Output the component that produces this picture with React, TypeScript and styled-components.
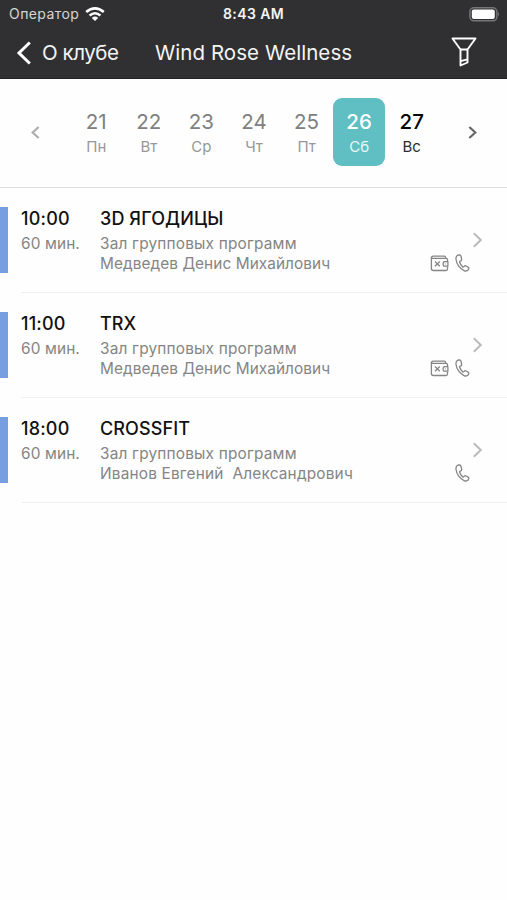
import React from "react";
import styled, { createGlobalStyle } from "styled-components";

const GlobalStyle = createGlobalStyle`
  *, *::before, *::after { box-sizing: border-box; }
  body { margin: 0; background: #fefefe; font-family: Inter, "Liberation Sans", sans-serif; }
  button { font: inherit; color: inherit; background: none; border: 0; padding: 0; margin: 0; }
  svg { display: block; flex: none; }
`;

const Screen = styled.div`
  width: 507px;
  height: 900px;
  overflow: hidden;
  background: #fefefe;
`;

const Header = styled.header`
  height: 79px;
  background: #303032;
  color: #f4f4f4;
  border-bottom: 1px solid #242426;
`;

const StatusBar = styled.div`
  height: 28px;
  display: grid;
  grid-template-columns: 1fr auto 1fr;
  align-items: center;
  padding: 0 7px 0 9px;
`;

const Carrier = styled.div`
  display: flex;
  align-items: center;
  gap: 6px;
  font-size: 14px;
  line-height: 28px;
  letter-spacing: 0.42px;
  color: #d6d6d7;
`;

const Clock = styled.div`
  font-size: 14px;
  font-weight: 600;
  line-height: 28px;
  letter-spacing: 0.4px;
  transform: translateX(-1px);
`;

const Battery = styled.div`
  display: flex;
  justify-content: flex-end;
`;

const NavBar = styled.nav`
  height: 50px;
  display: grid;
  grid-template-columns: 139px 1fr 139px;
  align-items: center;
  padding: 0 16px;
`;

const BackButton = styled.button`
  display: flex;
  align-items: center;
  gap: 9px;
  font-size: 20.5px;
  letter-spacing: -0.45px;
  line-height: 50px;
  white-space: nowrap;
`;

const Title = styled.h1`
  margin: 0;
  font-size: 20.5px;
  font-weight: 400;
  letter-spacing: 0.06px;
  line-height: 50px;
  white-space: nowrap;
`;

const FilterButton = styled.button`
  justify-self: end;
  margin: -3px 14px 0 0;
`;

const WeekStrip = styled.section`
  height: 109px;
  display: grid;
  grid-template-columns: 70px 368px 69px;
  padding-top: 19px;
  border-bottom: 1px solid #dedede;
`;

const WeekArrow = styled.button<{ $color: string }>`
  height: 69px;
  display: flex;
  align-items: center;
  justify-content: center;
  color: ${(p) => p.$color};
`;

const Days = styled.div`
  display: grid;
  grid-template-columns: repeat(7, 1fr);
`;

type DayState = "past" | "selected" | "next";

const DayCell = styled.button<{ $state: DayState }>`
  height: 68px;
  padding-top: 4px;
  border-radius: 9px;
  text-align: center;
  background: ${(p) => (p.$state === "selected" ? "#60bfc2" : "transparent")};
  color: ${(p) => ({ past: "#808080", selected: "#ffffff", next: "#050505" })[p.$state]};
`;

const DayNumber = styled.div<{ $strong: boolean }>`
  font-size: 20.5px;
  font-weight: ${(p) => (p.$strong ? 500 : 400)};
  line-height: 26px;
`;

const DayName = styled.div<{ $state: DayState }>`
  font-size: 15px;
  line-height: 24px;
  color: ${(p) => ({ past: "#979797", selected: "#e9f7f7", next: "#2c2c2c" })[p.$state]};
`;

const ClassList = styled.ul`
  list-style: none;
  margin: 0;
  padding: 0;
`;

const ClassRow = styled.li`
  height: 105px;
  display: grid;
  grid-template-columns: 8px 92px 1fr 77px;
  align-items: start;
  padding-top: 19px;
  background: linear-gradient(#f0f0f0, #f0f0f0) 21px 104px / 486px 1px no-repeat;
`;

const Marker = styled.div`
  height: 66px;
  background: #779fdf;
`;

const TimeColumn = styled.div`
  padding-left: 13px;
`;

const Strong = styled.div<{ $spacing: string }>`
  font-size: 18px;
  font-weight: 500;
  line-height: 23px;
  color: #111;
  white-space: nowrap;
  letter-spacing: ${(p) => p.$spacing};
`;

const Muted = styled.div<{ $spacing?: string }>`
  font-size: 15.4px;
  line-height: 19.5px;
  color: #858585;
  white-space: pre;
  letter-spacing: ${(p) => p.$spacing ?? "0.18px"};
`;

const MutedGroup = styled.div`
  padding-top: 4px;
`;

const Actions = styled.div`
  height: 66px;
  display: flex;
  flex-direction: column;
  align-items: flex-end;
  padding: 25px 24px 0 0;
`;

const Badges = styled.div`
  display: flex;
  align-items: center;
  gap: 6px;
  margin: 6px 13px 0 0;
`;

const WifiIcon = () => (
  <svg width="20" height="14" viewBox="0 0 20 14" fill="none" stroke="#fff" strokeWidth="2.6">
    <path d="M1.2 5.1Q10-2.4 18.8 5.1" />
    <path d="M4.6 8.5Q10 4 15.4 8.5" />
    <path d="M10 14 6.8 10.9Q10 8.3 13.2 10.9Z" fill="#fff" stroke="none" />
  </svg>
);

const BatteryIcon = () => (
  <svg width="31" height="15" viewBox="0 0 31 15">
    <rect x=".9" y=".8" width="27" height="13" rx="4" fill="none" stroke="#757577" strokeWidth="1.5" />
    <rect x="2.8" y="2.6" width="23" height="9.4" rx="2" fill="#fff" />
    <path d="M29 5Q31 7.2 29 9.5Z" fill="#757577" />
  </svg>
);

const BackIcon = () => (
  <svg width="17" height="24" viewBox="0 0 17 24" fill="none" stroke="#fff" strokeWidth="3">
    <path d="M13.8 1.5 3 12 13.8 22.5" />
  </svg>
);

const FilterIcon = () => (
  <svg width="26" height="30" viewBox="0 0 26 30" fill="none" stroke="#fff" strokeWidth="1.9" strokeLinejoin="round">
    <path d="M1.5 1.5H24.5L16.5 12.5V25.5L9.5 28.5V12.5Z" />
    <path d="M9.5 12.5H16.5M9.5 24.2 16.5 22.4" />
  </svg>
);

const SmallChevron = ({ flip = false }: { flip?: boolean }) => (
  <svg width="9" height="13" viewBox="0 0 9 13" fill="none" stroke="currentColor" strokeWidth="2.2">
    <path d={flip ? "M1.3 1 7.3 6.5 1.3 12" : "M7.7 1 1.7 6.5 7.7 12"} />
  </svg>
);

const RowChevron = () => (
  <svg width="11" height="16" viewBox="0 0 11 16" fill="none" stroke="#b9b9b9" strokeWidth="1.9">
    <path d="M1.8 1.3 8.8 8 1.8 14.7" />
  </svg>
);

const WalletIcon = () => (
  <svg width="19" height="17" viewBox="0 0 19 17" fill="none" stroke="#858585" strokeWidth="1.3" strokeLinejoin="round">
    <path d="M17.5 6V4.6Q17.5 3.4 16 3.4H3Q1.4 3.4 1.4 2.6V13.4Q1.4 15.5 3.5 15.5H16Q17.5 15.5 17.5 14V11.7" />
    <path d="M1.4 3Q1.4 1.2 3.2 1.2H14.2Q15.7 1.2 15.7 3.3" />
    <path d="M17.9 6.6H14.8Q13.1 6.6 13.1 8.9T14.8 11.2H17.9ZM15.3 8.9H15.9" />
    <path d="M5 6.5 9.8 11.3M9.8 6.5 5 11.3" />
  </svg>
);

const PhoneIcon = () => (
  <svg width="15" height="18" viewBox="0 0 15 18" fill="none" stroke="#858585" strokeWidth="1.3" strokeLinejoin="round">
    <path d="M3.7 1C1.8 1.1.8 2.8 1 5.2 1.5 10.2 5 15.1 9.4 16.8 11.3 17.5 13.4 16.4 13.8 14.6Q14 13.7 13 13.1L11.2 12Q10 11.4 9.3 12.1L8.7 12.8Q8.1 13.3 7.5 12.7C6.2 11.5 5.2 9.9 4.7 8.3Q4.4 7.5 5.1 7.2L5.9 6.9Q6.8 6.5 6.6 5.4L6.1 2.6Q5.7 1 4.6 1Z" />
  </svg>
);

const days: { number: number; name: string; state: DayState }[] = [
  { number: 21, name: "Пн", state: "past" },
  { number: 22, name: "Вт", state: "past" },
  { number: 23, name: "Ср", state: "past" },
  { number: 24, name: "Чт", state: "past" },
  { number: 25, name: "Пт", state: "past" },
  { number: 26, name: "Сб", state: "selected" },
  { number: 27, name: "Вс", state: "next" },
];

const classes = [
  { time: "10:00", name: "3D ЯГОДИЦЫ", coach: "Медведев Денис Михайлович", spacing: "0.06px", paid: true },
  { time: "11:00", name: "TRX", coach: "Медведев Денис Михайлович", spacing: "0.06px", paid: true },
  { time: "18:00", name: "CROSSFIT", coach: "Иванов Евгений  Александрович", spacing: "0.18px", paid: false },
];

export default function App() {
  return (
    <Screen>
      <GlobalStyle />
      <Header>
        <StatusBar>
          <Carrier>Оператор<WifiIcon /></Carrier>
          <Clock>8:43 AM</Clock>
          <Battery><BatteryIcon /></Battery>
        </StatusBar>
        <NavBar>
          <BackButton><BackIcon />О клубе</BackButton>
          <Title>Wind Rose Wellness</Title>
          <FilterButton aria-label="Фильтр"><FilterIcon /></FilterButton>
        </NavBar>
      </Header>
      <WeekStrip>
        <WeekArrow $color="#adadad"><SmallChevron /></WeekArrow>
        <Days>
          {days.map((d) => (
            <DayCell key={d.number} $state={d.state}>
              <DayNumber $strong={d.state !== "past"}>{d.number}</DayNumber>
              <DayName $state={d.state}>{d.name}</DayName>
            </DayCell>
          ))}
        </Days>
        <WeekArrow $color="#666"><SmallChevron flip /></WeekArrow>
      </WeekStrip>
      <ClassList>
        {classes.map((c) => (
          <ClassRow key={c.time}>
            <Marker />
            <TimeColumn>
              <Strong $spacing="0.2px">{c.time}</Strong>
              <MutedGroup><Muted $spacing="0.12px">60 мин.</Muted></MutedGroup>
            </TimeColumn>
            <div>
              <Strong $spacing="0.1px">{c.name}</Strong>
              <MutedGroup>
                <Muted>Зал групповых программ</Muted>
                <Muted $spacing={c.spacing}>{c.coach}</Muted>
              </MutedGroup>
            </div>
            <Actions>
              <RowChevron />
              <Badges>
                {c.paid && <WalletIcon />}
                <PhoneIcon />
              </Badges>
            </Actions>
          </ClassRow>
        ))}
      </ClassList>
    </Screen>
  );
}
